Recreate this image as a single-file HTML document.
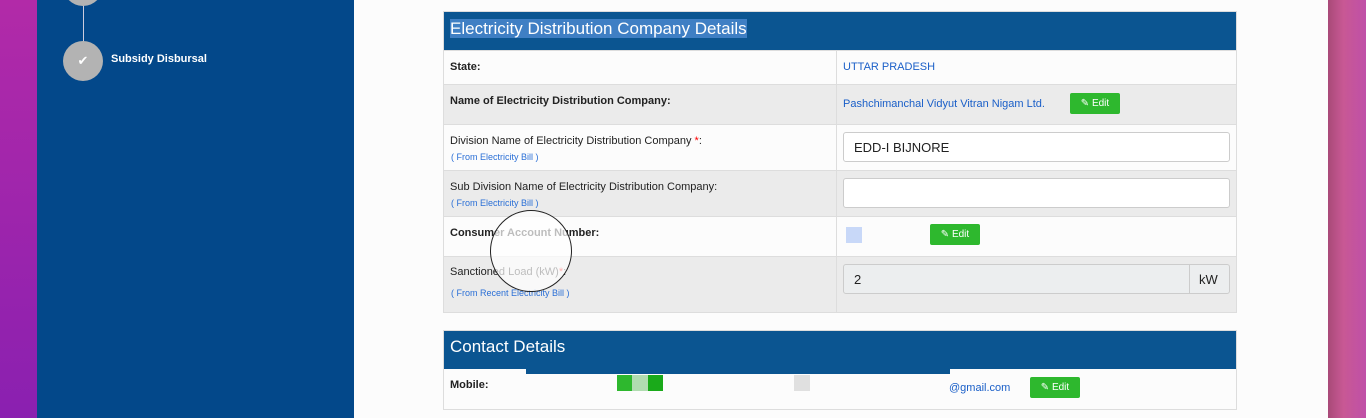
<!DOCTYPE html><html><head><style>
body{margin:0;width:1366px;height:418px;overflow:hidden;position:relative;font-family:"Liberation Sans",sans-serif;background:#fff}
.l{position:absolute;left:0;top:0;width:37px;height:418px;background:linear-gradient(180deg,#b22aa8,#8a20b0)}
.r{position:absolute;left:1328px;top:0;width:38px;height:418px;background:linear-gradient(90deg,#a84a78,#c85894 40%,#c050a8)}
.sb{position:absolute;left:37px;top:0;width:317px;height:418px;background:#03488a}
.c{position:absolute;left:354px;top:0;width:974px;height:418px;background:#fcfcfc}
.circ{position:absolute;width:40px;height:40px;border-radius:50%;background:#b3b3b3}
.t{position:absolute;left:443px;width:794px;border:1px solid #ddd;box-sizing:border-box}
.h{background:#0b5591;color:#fff;font-size:17px;padding-left:6px;box-sizing:border-box}
.row{position:absolute;left:0;width:792px;border-top:1px solid #ddd;box-sizing:border-box}
.g{background:#ebebeb}
.lab{position:absolute;left:6px;font-size:11px;color:#222}
.b{font-weight:bold}
.sub{position:absolute;left:7px;font-size:9px;color:#2a6fd6}
.vd{position:absolute;left:392px;top:0;bottom:0;border-left:1px solid #ddd}
.v{position:absolute;left:399px;font-size:11px;color:#1a5fc8}
.inp{position:absolute;left:399px;width:387px;height:30px;border:1px solid #ccc;border-radius:3px;background:#fff;box-sizing:border-box;font-size:13px;padding:7px 10px;color:#222}
.ed{position:absolute;background:#2eb82e;color:#fff;font-size:10px;border-radius:2px;height:21px;line-height:21px;width:50px;text-align:center}
</style></head><body>
<div class="l"></div><div class="r"></div>
<div class="sb">
<div style="position:absolute;left:46px;top:0;width:1px;height:42px;background:#ccd"></div>
<div class="circ" style="left:26px;top:-34px"></div>
<div class="circ" style="left:26px;top:41px;color:#fff;text-align:center;line-height:40px;font-size:13px">✔</div>
<div style="position:absolute;left:74px;top:53px;color:#fff;font-size:11px;font-weight:bold">Subsidy Disbursal</div>
</div>
<div class="c"></div>
<div class="t" style="top:11px;height:302px">
<div class="h" style="height:39px;line-height:33px"><span style="background:#3f7fc4">Electricity Distribution Company Details</span></div>
<div class="row" style="top:38px;height:34px"><div class="lab b" style="top:10px">State:</div><div class="vd"></div><div class="v" style="top:10px">UTTAR PRADESH</div></div>
<div class="row g" style="top:72px;height:40px"><div class="lab b" style="top:10px">Name of Electricity Distribution Company:</div><div class="vd"></div><div class="v" style="top:13px">Pashchimanchal Vidyut Vitran Nigam Ltd.</div><div class="ed" style="left:626px;top:8px">✎ Edit</div></div>
<div class="row" style="top:112px;height:46px"><div class="lab" style="top:10px">Division Name of Electricity Distribution Company <span style="color:red">*</span>:</div><div class="sub" style="top:27px">( From Electricity Bill )</div><div class="vd"></div><div class="inp" style="top:7px">EDD-I BIJNORE</div></div>
<div class="row g" style="top:158px;height:46px"><div class="lab" style="top:10px">Sub Division Name of Electricity Distribution Company:</div><div class="sub" style="top:27px">( From Electricity Bill )</div><div class="vd"></div><div class="inp" style="top:7px"></div></div>
<div class="row" style="top:204px;height:40px"><div class="lab b" style="top:10px">Consumer Account Number:</div><div class="vd"></div><div style="position:absolute;left:402px;top:10px;width:16px;height:16px;background:#c8d8f8"></div><div class="ed" style="left:486px;top:7px">✎ Edit</div></div>
<div class="row g" style="top:244px;height:56px"><div class="lab" style="top:9px">Sanctioned Load (kW)<span style="color:red">*</span>:</div><div class="sub" style="top:31px">( From Recent Electricity Bill )</div><div class="vd"></div><div class="inp" style="top:7px;background:#eceeef;width:347px;border-radius:3px 0 0 3px">2</div><div class="inp" style="top:7px;left:745px;width:41px;background:#eceeef;padding:7px 9px;border-radius:0 3px 3px 0">kW</div></div>
<div style="position:absolute;left:46px;top:198px;width:80px;height:80px;border:1.5px solid #222;border-radius:50%;background:rgba(255,255,255,.7)"></div>
</div>
<div class="t" style="top:330px;height:80px">
<div class="h" style="height:38px;line-height:32px">Contact Details</div>
<div style="position:absolute;left:82px;top:37px;width:424px;height:6px;background:#0b5591"></div>
<div class="lab b" style="top:48px">Mobile:</div>
<div style="position:absolute;left:173px;top:44px;width:15px;height:16px;background:#2eb82e"></div>
<div style="position:absolute;left:188px;top:44px;width:16px;height:16px;background:#b0dcb0"></div>
<div style="position:absolute;left:204px;top:44px;width:15px;height:16px;background:#1aaa1a"></div>
<div style="position:absolute;left:350px;top:44px;width:16px;height:16px;background:#e0e0e0"></div>
<div class="v" style="left:505px;top:51px">@gmail.com</div>
<div class="ed" style="left:586px;top:46px">✎ Edit</div>
</div>
</body></html>
